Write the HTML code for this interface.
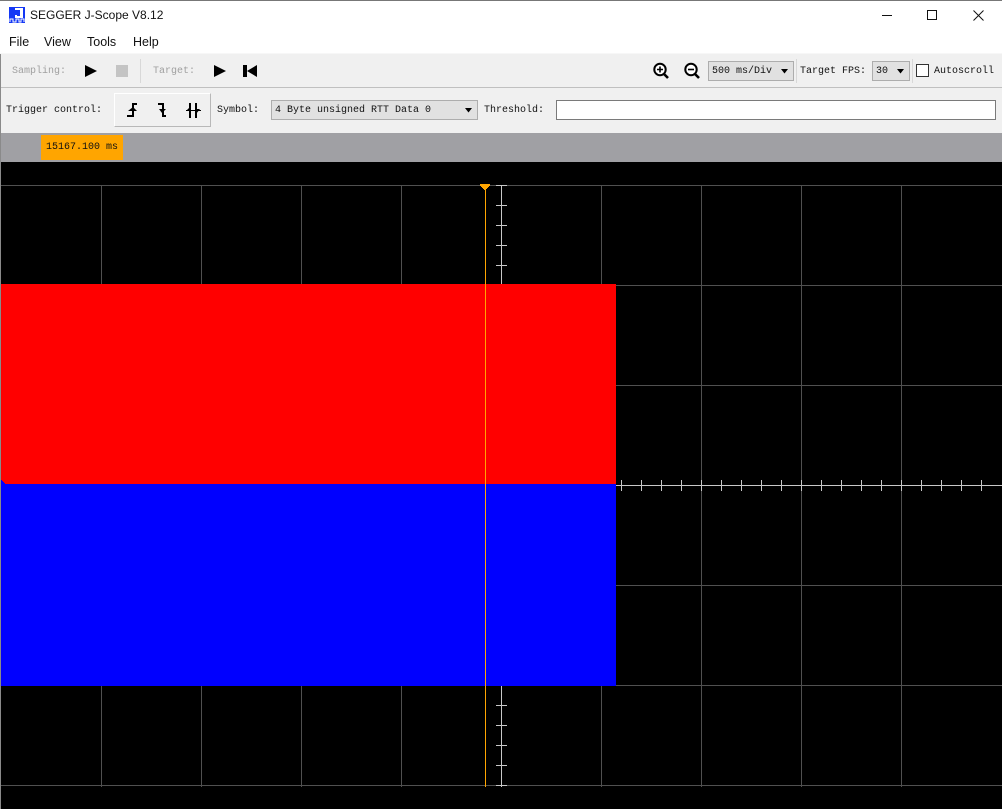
<!DOCTYPE html>
<html><head><meta charset="utf-8"><title>SEGGER J-Scope V8.12</title>
<style>
html,body{margin:0;padding:0;background:#fff}
#w{position:relative;width:1002px;height:809px;overflow:hidden;background:#fff;font-family:"Liberation Mono",monospace;font-size:10px;color:#111}
#w div{position:absolute;box-sizing:border-box;white-space:pre}
.m{font-family:"Liberation Sans",sans-serif;font-size:12.5px;color:#111;top:34px;line-height:16px}
.t{line-height:12px;height:12px}
.c{background:#e1e1e1;border:1px solid #adadad;line-height:19px;padding-left:3px;color:#111}
svg{position:absolute;display:block}
</style></head><body><div id="w">
<div style="left:0;top:0;width:1002px;height:1px;background:#777"></div>
<svg style="left:9px;top:7px" width="16" height="16" viewBox="0 0 16 16" shape-rendering="crispEdges"><rect width="16" height="16" fill="#1438f5"/><path d="M6 1H14V11H6V8H8V9H11V3H6Z" fill="#fff"/><path d="M1 15V12H4V15H7V12H10V15H12V12H15V15" fill="none" stroke="#fff" stroke-width="1"/></svg>
<div style="left:30px;top:7px;font-family:'Liberation Sans',sans-serif;font-size:12px;line-height:17px;color:#111">SEGGER J-Scope V8.12</div>
<svg style="left:880px;top:8px" width="110" height="14" viewBox="0 0 110 14"><path d="M2 7.500H12" stroke="#111" fill="none"/><rect x="47.500" y="2.500" width="9" height="9" fill="none" stroke="#111"/><path d="M93.500 2.500L103.500 12.500M103.500 2.500L93.500 12.500" stroke="#111" fill="none"/></svg>
<div class="m" style="left:9px">File</div><div class="m" style="left:44px">View</div><div class="m" style="left:87px">Tools</div><div class="m" style="left:133px">Help</div>

<div style="left:0;top:53px;width:1002px;height:1px;background:#f7f7f7"></div>
<div style="left:1px;top:54px;width:1001px;height:33px;background:#f0f0f0"></div>
<div style="left:1px;top:87px;width:1001px;height:1px;background:#c0c0c0"></div>
<div style="left:1px;top:88px;width:1001px;height:45px;background:#f0f0f0"></div>
<div style="left:0;top:54px;width:1px;height:755px;background:#8a8a8a"></div>

<div class="t" style="left:12px;top:66px;color:#a0a0a0">Sampling:</div>
<svg style="left:84px;top:64px" width="14" height="14"><path d="M1 1L13 7L1 13Z" fill="#000"/></svg>
<div style="left:116px;top:65px;width:12px;height:12px;background:#c4c4c4"></div>
<div style="left:140px;top:59px;width:1px;height:24px;background:#d8d8d8"></div>
<div class="t" style="left:153px;top:66px;color:#a0a0a0">Target:</div>
<svg style="left:213px;top:64px" width="14" height="14"><path d="M1 1L13 7L1 13Z" fill="#000"/></svg>
<svg style="left:243px;top:64px" width="15" height="14"><path d="M0 1H4V13H0ZM4 7L14 1V13Z" fill="#000"/></svg>

<svg style="left:652px;top:62px" width="18" height="18" viewBox="0 0 18 18"><circle cx="8" cy="7.500" r="5.700" fill="#fff" stroke="#000" stroke-width="2"/><path d="M12 12L16 16" stroke="#000" stroke-width="2.600"/><path d="M5 7.500H11M8 4.500V10.500" stroke="#000" stroke-width="1.600"/></svg>
<svg style="left:683px;top:62px" width="18" height="18" viewBox="0 0 18 18"><circle cx="8" cy="7.500" r="5.700" fill="#fff" stroke="#000" stroke-width="2"/><path d="M12 12L16 16" stroke="#000" stroke-width="2.600"/><path d="M5 7.500H11" stroke="#000" stroke-width="1.600"/></svg>
<div class="c" style="left:708px;top:61px;width:86px;height:20px">500 ms/Div</div>
<svg style="left:781px;top:69px" width="7" height="5"><path d="M0 0H7L3.500 4.500Z" fill="#000"/></svg>
<div style="left:796px;top:59px;width:1px;height:24px;background:#d8d8d8"></div>
<div class="t" style="left:800px;top:66px">Target FPS:</div>
<div class="c" style="left:872px;top:61px;width:38px;height:20px">30</div>
<svg style="left:897px;top:69px" width="7" height="5"><path d="M0 0H7L3.500 4.500Z" fill="#000"/></svg>
<div style="left:912px;top:59px;width:1px;height:24px;background:#d8d8d8"></div>
<div style="left:916px;top:64px;width:13px;height:13px;background:#fff;border:1px solid #333"></div>
<div class="t" style="left:934px;top:66px">Autoscroll</div>

<div class="t" style="left:6px;top:105px">Trigger control:</div>
<div style="left:114px;top:93px;width:97px;height:34px;border:1px solid #fff;border-right-color:#b8b8b8;border-bottom-color:#b8b8b8;background:#f0f0f0"></div>
<svg style="left:124px;top:101px" width="80" height="18" viewBox="0 0 80 18" fill="#000"><path d="M8 2H13V4H10V16H3V14H8Z"/><path d="M4 10L9 6L13 10Z"/><path d="M34 2H40V14H42V16H38V4H34Z"/><path d="M35 8L42 8L38 12Z"/><path d="M65 2H67V17H65ZM71 2H73V17H71Z"/><path d="M62 9H77V10H62Z"/><path d="M62 10H67L66 6Z"/><path d="M71 8H76L72 13Z"/></svg>
<div class="t" style="left:217px;top:105px">Symbol:</div>
<div class="c" style="left:271px;top:100px;width:207px;height:20px;line-height:19px;padding-left:3px">4 Byte unsigned RTT Data 0</div>
<svg style="left:465px;top:108px" width="7" height="5"><path d="M0 0H7L3.500 4.500Z" fill="#000"/></svg>
<div class="t" style="left:484px;top:105px">Threshold:</div>
<div style="left:556px;top:100px;width:440px;height:20px;background:#fff;border:1px solid #7a7a7a"></div>

<div style="left:1px;top:133px;width:1001px;height:29px;background:#a0a0a4"></div>
<div style="left:41px;top:135px;width:82px;height:25px;background:#ffa500;color:#111;line-height:25px;padding-left:5px">15167.100 ms</div>

<svg style="left:1px;top:162px" width="1001" height="647" viewBox="1 162 1001 647" shape-rendering="crispEdges">
<rect x="1" y="162" width="1001" height="647" fill="#000"/>
<g fill="#505050">
<rect x="101" y="185" width="1" height="602"/><rect x="201" y="185" width="1" height="602"/><rect x="301" y="185" width="1" height="602"/><rect x="401" y="185" width="1" height="602"/><rect x="601" y="185" width="1" height="602"/><rect x="701" y="185" width="1" height="602"/><rect x="801" y="185" width="1" height="602"/><rect x="901" y="185" width="1" height="602"/>
<rect x="1" y="185" width="1001" height="1"/><rect x="1" y="285" width="1001" height="1"/><rect x="1" y="385" width="1001" height="1"/><rect x="1" y="585" width="1001" height="1"/><rect x="1" y="685" width="1001" height="1"/><rect x="1" y="785" width="1001" height="1"/>
</g>
<g fill="#c8c8c8">
<rect x="501" y="185" width="1" height="602"/>
<rect x="496" y="185" width="11" height="1"/><rect x="496" y="205" width="11" height="1"/><rect x="496" y="225" width="11" height="1"/><rect x="496" y="245" width="11" height="1"/><rect x="496" y="265" width="11" height="1"/>
<rect x="496" y="705" width="11" height="1"/><rect x="496" y="725" width="11" height="1"/><rect x="496" y="745" width="11" height="1"/><rect x="496" y="765" width="11" height="1"/><rect x="496" y="785" width="11" height="1"/>
<rect x="616" y="485" width="386" height="1"/>
<rect x="621" y="480" width="1" height="11"/><rect x="641" y="480" width="1" height="11"/><rect x="661" y="480" width="1" height="11"/><rect x="681" y="480" width="1" height="11"/><rect x="701" y="480" width="1" height="11"/><rect x="721" y="480" width="1" height="11"/><rect x="741" y="480" width="1" height="11"/><rect x="761" y="480" width="1" height="11"/><rect x="781" y="480" width="1" height="11"/><rect x="801" y="480" width="1" height="11"/><rect x="821" y="480" width="1" height="11"/><rect x="841" y="480" width="1" height="11"/><rect x="861" y="480" width="1" height="11"/><rect x="881" y="480" width="1" height="11"/><rect x="901" y="480" width="1" height="11"/><rect x="921" y="480" width="1" height="11"/><rect x="941" y="480" width="1" height="11"/><rect x="961" y="480" width="1" height="11"/><rect x="981" y="480" width="1" height="11"/>
</g>
<rect x="1" y="284" width="615" height="200" fill="#f00"/>
<rect x="1" y="484" width="615" height="202" fill="#00f"/>
<path d="M1 480H2V481H3V482H4V483H5V484H1Z" fill="#00f"/>
<rect x="485" y="185" width="1" height="602" fill="#ffa500"/>
<path d="M480 184H490V186H489V187H488V188H487V189H486V190H484V189H483V188H482V187H481V186H480Z" fill="#ffa500"/>
</svg>
</div></body></html>
